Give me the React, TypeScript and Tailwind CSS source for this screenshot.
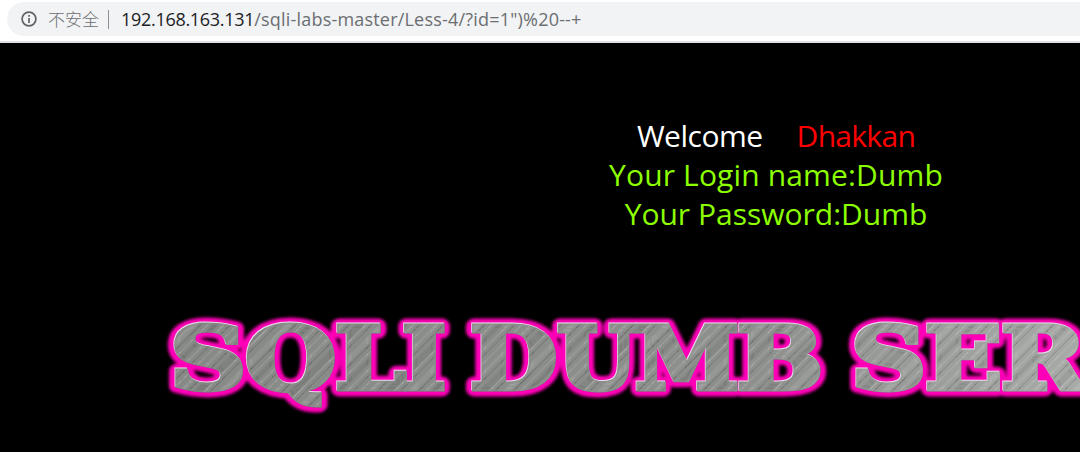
type Glyph = { ch: string; x: number; w: number };

const glyphs: Glyph[] = [
  { ch: "S", x: 170, w: 76 },
  { ch: "Q", x: 245, w: 91 },
  { ch: "L", x: 335, w: 71 },
  { ch: "I", x: 402, w: 44 },
  { ch: "D", x: 470, w: 87 },
  { ch: "U", x: 557, w: 80 },
  { ch: "M", x: 635, w: 104 },
  { ch: "B", x: 737, w: 86 },
  { ch: "S", x: 851, w: 75 },
  { ch: "E", x: 925, w: 77 },
  { ch: "R", x: 1001, w: 85 },
];

function Letters() {
  return (
    <>
      {glyphs.map((g) => (
        <text key={g.x} x={g.x} y="389" textLength={g.w} lengthAdjust="spacingAndGlyphs">
          {g.ch}
        </text>
      ))}
    </>
  );
}

function Banner() {
  return (
    <svg
      className="block h-[152px] w-full font-['DejaVu_Serif',serif] text-[86px] font-bold"
      viewBox="0 300 1080 152"
      aria-label="SQLI DUMB SERIES"
    >
      <defs>
        <linearGradient id="steel" x1="160" y1="0" x2="1080" y2="0" gradientUnits="userSpaceOnUse">
          <stop offset="0" stopColor="#868986" />
          <stop offset="0.65" stopColor="#8e908e" />
          <stop offset="1" stopColor="#a8aaa8" />
        </linearGradient>
        <filter id="brush" x="160" y="310" width="920" height="110" filterUnits="userSpaceOnUse">
          <feGaussianBlur stdDeviation="0.35" />
        </filter>
        <pattern id="grain" width="67" height="140" patternUnits="userSpaceOnUse" patternTransform="rotate(45)">
          <rect x="1" width="3" height="140" fill="#fff" opacity="0.08" />
          <rect x="7" width="1" height="140" fill="#000" opacity="0.14" />
          <rect x="12" width="6" height="140" fill="#000" opacity="0.06" />
          <rect x="19" width="1" height="140" fill="#fff" opacity="0.16" />
          <rect x="23" width="1" height="140" fill="#000" opacity="0.12" />
          <rect x="29" width="5" height="140" fill="#fff" opacity="0.07" />
          <rect x="36" width="1" height="140" fill="#000" opacity="0.15" />
          <rect x="41" width="1" height="140" fill="#fff" opacity="0.14" />
          <rect x="45" width="4" height="140" fill="#000" opacity="0.07" />
          <rect x="52" width="2" height="140" fill="#fff" opacity="0.09" />
          <rect x="57" width="1" height="140" fill="#000" opacity="0.12" />
          <rect x="62" width="1" height="140" fill="#fff" opacity="0.13" />
        </pattern>
        <filter id="glow" x="150" y="300" width="940" height="130" filterUnits="userSpaceOnUse">
          <feGaussianBlur stdDeviation="1.8" />
        </filter>
      </defs>
      <g fill="#ff00b8" stroke="#ff00b8" strokeWidth="15" strokeLinejoin="round" filter="url(#glow)">
        <Letters />
      </g>
      <g fill="#6a3460" stroke="#6a3460" strokeWidth="5" transform="translate(0.3 0.3)" opacity="0.7">
        <Letters />
      </g>
      <g fill="#e8dfe8" stroke="#e8dfe8" strokeWidth="5" transform="translate(-0.6 -0.6)">
        <Letters />
      </g>
      <g fill="url(#steel)" stroke="url(#steel)" strokeWidth="5" transform="translate(0.3 0.3)">
        <Letters />
      </g>
      <g fill="url(#grain)" stroke="url(#grain)" strokeWidth="4" filter="url(#brush)">
        <Letters />
      </g>
    </svg>
  );
}

function AddressBar() {
  return (
    <header className="flex h-[43px] items-start border-b-2 border-[#dee1e6] bg-white pt-[2px] pl-[7px]">
      <div className="flex h-[34px] flex-1 items-center rounded-l-full bg-[#f1f3f4] pl-[14px] text-[18px] whitespace-nowrap text-[#6b6e72]">
        <svg className="size-4" viewBox="0 0 16 16" fill="none" stroke="#5f6368" strokeWidth="1.7">
          <circle cx="8" cy="8" r="6.9" />
          <path d="M8 7v5M8 4v1.7" />
        </svg>
        <span className="ml-[11px] font-['Noto_Sans_CJK_SC',sans-serif] text-[17px] font-light">不安全</span>
        <span className="ml-[9px] h-[19px] w-px bg-[#8b8e92]" />
        <span className="ml-[12px] font-['Open_Sans',sans-serif]">
          <span className="tracking-[-0.3px] text-[#202124]">192.168.163.131</span>
          <span className="tracking-[0.2px]">/sqli-labs-master/Less-4/?id=1")%20--+</span>
        </span>
      </div>
    </header>
  );
}

export default function App() {
  return (
    <div className="flex h-[452px] w-full flex-col overflow-hidden bg-black">
      <AddressBar />
      <main className="flex flex-1 flex-col">
        <div className="ml-[472px] h-[257px] w-[608px] pt-[73px] text-center font-['Open_Sans',sans-serif] text-[30px] leading-[39px] whitespace-pre text-[#8cff00]">
          <p>
            <span className="tracking-[-0.5px] text-white">Welcome</span>
            <span className="ml-[34px] tracking-[-0.7px] text-[#ff0000]">Dhakkan</span>
          </p>
          <p className="tracking-[0.15px]">Your Login name:Dumb</p>
          <p>Your Password:Dumb</p>
        </div>
        <Banner />
      </main>
    </div>
  );
}
